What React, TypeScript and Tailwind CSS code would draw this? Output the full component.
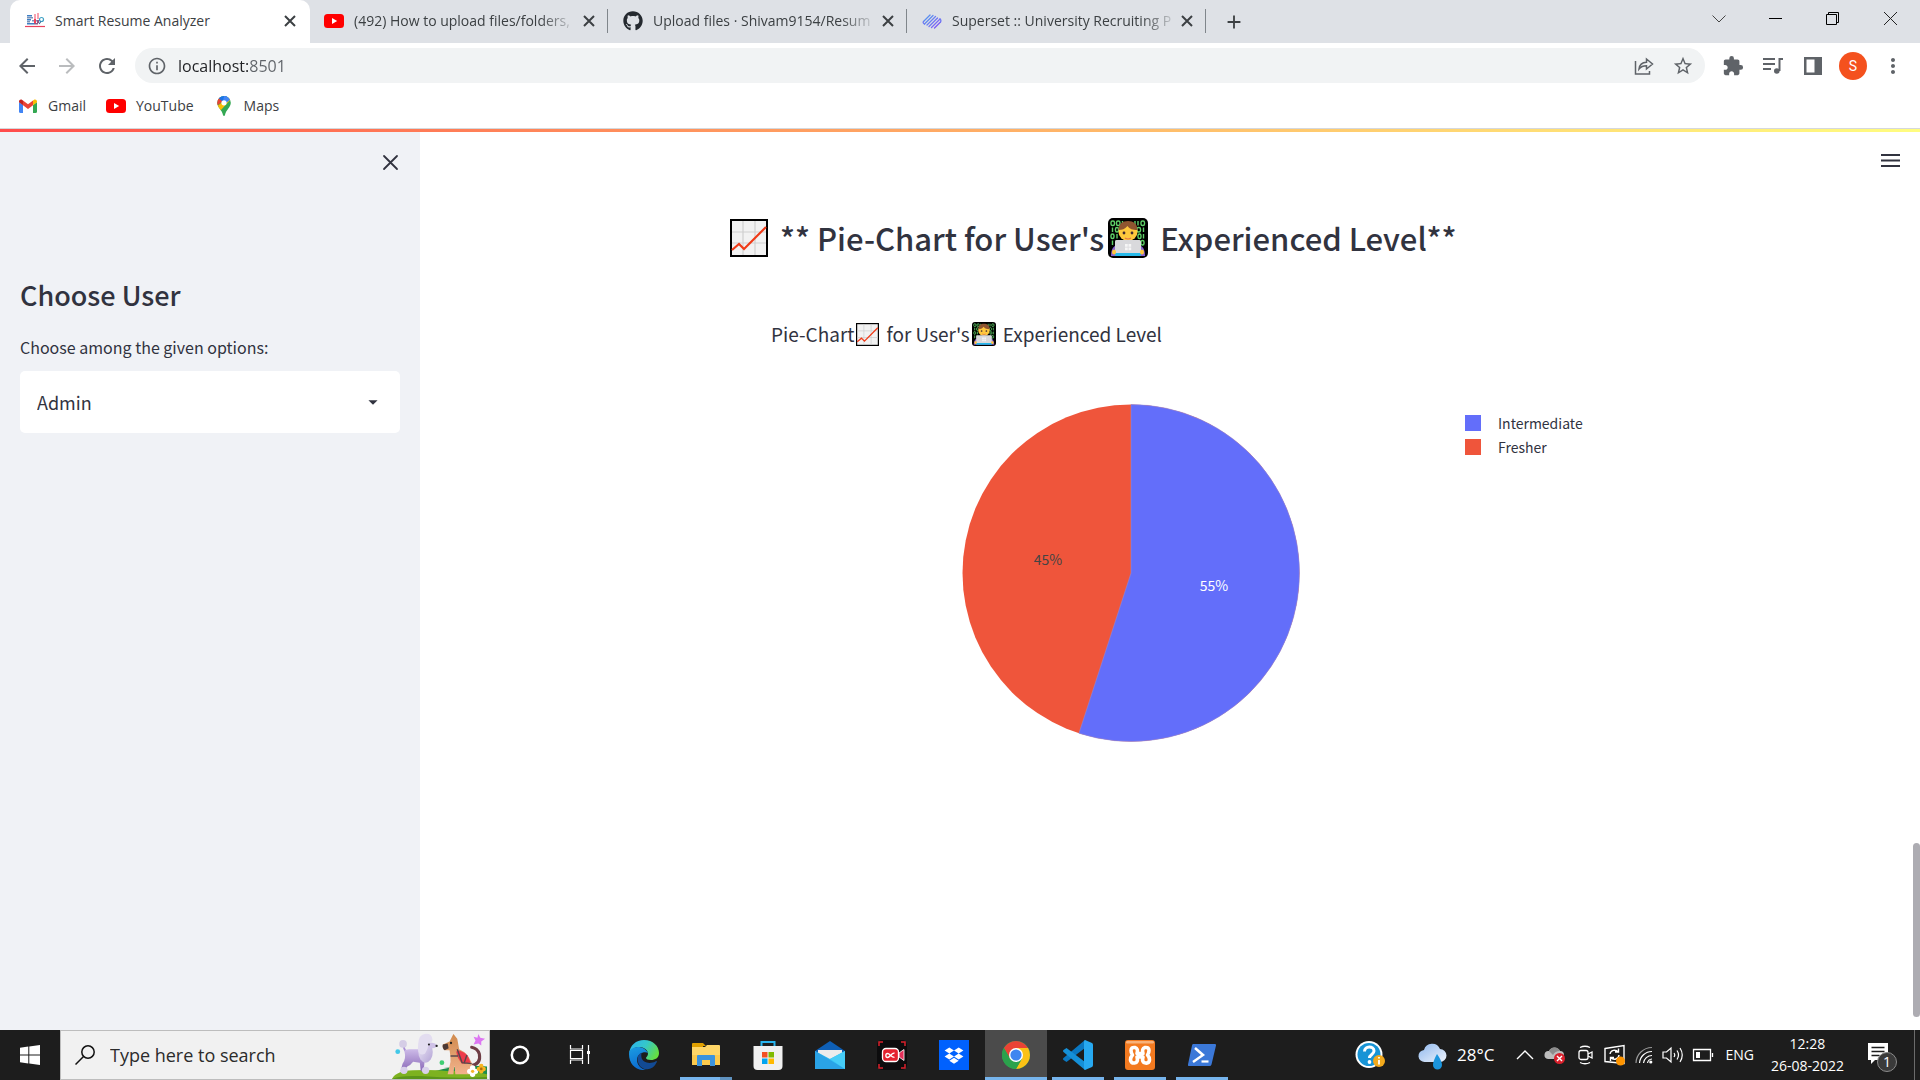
import React from 'react';
import type { ReactNode } from 'react';
import { FaGithub } from 'react-icons/fa';
import {
  MdArrowBack,
  MdArrowForward,
  MdRefresh,
  MdInfoOutline,
  MdStarBorder,
  MdExtension,
  MdMoreVert,
  MdAdd,
  MdArrowDropDown,
} from 'react-icons/md';

/* ---------- Emoji drawings ---------- */

function ChartEmoji({ className }: { className: string }) {
  return (
    <svg viewBox="0 0 38 38" className={className} role="img" aria-label="Chart increasing">
      <rect width="38" height="38" fill="#000" />
      <rect x="2" y="2" width="34" height="34" fill="#f2f2f2" />
      <path d="M2 13h34M2 24h34M13 2v34M25 2v34" stroke="#cfcfcf" strokeWidth="1.2" />
      <path d="M2 31l7-6 5 5L36 8" fill="none" stroke="#f03a17" strokeWidth="2.2" />
    </svg>
  );
}

function CoderEmoji({ className }: { className: string }) {
  return (
    <svg viewBox="0 0 40 40" className={className} role="img" aria-label="Man technologist">
      <rect width="40" height="40" rx="5" fill="#000" />
      <g fill="none" stroke="#5fd068" strokeWidth="1.4">
        <rect x="3" y="3" width="3.500" height="4.500" rx="1.500" />
        <rect x="8.500" y="3" width="3.500" height="4.500" rx="1.500" />
        <rect x="33" y="3" width="3.500" height="4.500" rx="1.500" />
        <rect x="7.500" y="9.500" width="3" height="4.500" rx="1.500" />
        <rect x="29" y="9.500" width="3.500" height="4.500" rx="1.500" />
        <rect x="30" y="16" width="3" height="4.500" rx="1.500" />
        <rect x="3" y="16" width="3" height="4.500" rx="1.500" />
        <rect x="33" y="22.500" width="3" height="4.500" rx="1.500" />
        <path d="M14.500 3v4.500M27 3v4.500M30 3v4.500M4.500 9.500v4.500M35.500 9.500v4.500M9 16v4.500M35.500 16v4.500M4.500 22.500v4.500M8 22.500v4.500M30.500 22.500v4.500" />
      </g>
      <path d="M3 38c0-8 3-11 9-11h16c6 0 9 3 9 11z" fill="#8a63d2" />
      <ellipse cx="20" cy="14" rx="9.500" ry="9" fill="#ffc83d" />
      <path d="M10.500 12c0-6 4-9 9.500-9s9.500 3 9.500 9c-5 0-8-1-10-4-3 3-5 4-9 4z" fill="#8f5530" />
      <circle cx="16" cy="15" r="1.400" fill="#402a32" />
      <circle cx="24" cy="15" r="1.400" fill="#402a32" />
      <path d="M17 20q3 2 6 0" fill="none" stroke="#e2704a" strokeWidth="1.200" />
      <rect x="7" y="34" width="26" height="4" rx="1" fill="#26b8e8" />
      <rect x="7" y="22" width="26" height="13" rx="1.500" fill="#d9d9dc" />
      <path d="M17 26h2.700v2.700H17zM20.500 26h2.700v2.700h-2.700zM17 29.500h2.700v2.700H17zM20.500 29.500h2.700v2.700h-2.700z" fill="#f6f6f6" />
      <ellipse cx="6" cy="34" rx="2" ry="2.500" fill="#ffc83d" />
      <ellipse cx="34" cy="34" rx="2" ry="2.500" fill="#ffc83d" />
    </svg>
  );
}

/* ---------- Site icons ---------- */

function ResumeFavicon() {
  return (
    <svg viewBox="0 0 20 20" className="size-5 shrink-0" aria-hidden="true">
      <path d="M2 4h5v1.500H2zM2 8h4v1.500H2zM2 12h7v1.500H2z" fill="#3d7fc4" />
      <path d="M2 6h6v1.500H2zM7 9h5v1.500H7zM2 10h3v1.500H2z" fill="#7b93b8" />
      <path d="M9 3h2v5H9zM12 2h2v6h-2z" fill="#f7a3b0" />
      <path d="M9 8h2v4H9z" fill="#f2405c" />
      <path d="M12 9h2v3h-2zM9 12h4v1.500H9z" fill="#8b5a86" />
      <circle cx="16.500" cy="8.500" r="2" fill="none" stroke="#3da0c4" strokeWidth="1.200" />
      <path d="M14 13l2-2.500" stroke="#38639a" strokeWidth="1.200" />
      <path d="M0 15.500h20" stroke="#e8425c" strokeWidth="1.200" />
    </svg>
  );
}

function YouTubeIcon() {
  return (
    <svg viewBox="0 0 20 20" className="size-5 shrink-0" aria-hidden="true">
      <rect x="0" y="3" width="20" height="14" rx="3.500" fill="#f00" />
      <path d="M8 7l5.200 3L8 13z" fill="#fff" />
    </svg>
  );
}

function SupersetIcon() {
  return (
    <svg viewBox="0 0 20 20" className="size-5 shrink-0" aria-hidden="true">
      <g fill="none" strokeWidth="1.300" strokeLinecap="round">
        <path d="M1.500 10.500L8 4" stroke="#5a8df0" />
        <path d="M2.500 13L11 4.500" stroke="#5f88f1" />
        <path d="M5 14l8.500-8.500" stroke="#6a7ff2" />
        <path d="M7 15.500L15.500 7" stroke="#7276f4" />
        <path d="M9.500 16.500L18 8" stroke="#7a6af5" />
        <path d="M12.500 17l6-6" stroke="#7a5cf5" />
        <path d="M1.500 10.500q-1 1.500 1 2.500M18 8q1.500 1.500.5 3" stroke="#6f78f3" />
      </g>
    </svg>
  );
}

function GmailIcon() {
  return (
    <svg viewBox="0 0 20 20" className="size-5 shrink-0" aria-hidden="true">
      <path d="M1 6v9.500A1.500 1.500 0 0 0 2.500 17H5V9z" fill="#4285f4" />
      <path d="M19 6v9.500a1.500 1.500 0 0 1-1.500 1.500H15V9z" fill="#34a853" />
      <path d="M15 4.500V9.200l4-3V5.500c0-2-2-2.600-3.200-1.600z" fill="#fbbc04" />
      <path d="M5 9.200V4.500l5 3.700 5-3.700v4.700l-5 3.800z" fill="#ea4335" />
      <path d="M1 5.500v.7l4 3V4.500l-.8-.6C3 3 1 3.500 1 5.500z" fill="#c5221f" />
    </svg>
  );
}

function MapsIcon() {
  return (
    <svg viewBox="0 0 20 20" className="size-5 shrink-0" aria-hidden="true">
      <clipPath id="pin">
        <path d="M10 0a6.800 6.800 0 0 0-6.800 6.800c0 4.600 4.600 6.700 5.800 12.200.3 1.300 1.700 1.300 2 0 1.200-5.500 5.800-7.600 5.800-12.200A6.800 6.800 0 0 0 10 0z" />
      </clipPath>
      <g clipPath="url(#pin)">
        <rect width="20" height="20" fill="#34a853" />
        <path d="M0 13L15 0h5L6 15z" fill="#fbbc04" />
        <path d="M0 12V0h5l4 5z" fill="#ea4335" />
        <path d="M4.500 2L9 6l6-6H5z" fill="#1a73e8" />
        <path d="M10 0h7v3l-6 5-2-3z" fill="#4285f4" />
      </g>
      <circle cx="10" cy="6.800" r="2.600" fill="#fff" />
    </svg>
  );
}

/* ---------- Browser ---------- */

type TabInfo = { title: string; icon: ReactNode; active?: boolean };

const tabs: TabInfo[] = [
  { title: 'Smart Resume Analyzer', icon: <ResumeFavicon />, active: true },
  { title: '(492) How to upload files/folders,', icon: <YouTubeIcon /> },
  { title: 'Upload files · Shivam9154/Resum', icon: <FaGithub className="size-5 shrink-0 text-[#24292f]" /> },
  { title: 'Superset :: University Recruiting P', icon: <SupersetIcon /> },
];

function TabStrip() {
  return (
    <div className="flex h-[43px] bg-[#dee1e6] pl-[10px]">
      {tabs.map((tab) => (
        <div
          key={tab.title}
          className={
            tab.active
              ? 'flex w-[300px] items-center rounded-t-[10px] bg-white pr-3 pb-0.5 pl-[15px]'
              : 'relative flex w-[299px] items-center pr-3 pb-0.5 pl-[14px] after:absolute after:right-px after:h-6 after:w-px after:bg-[#80868b]'
          }
        >
          <button className="flex min-w-0 flex-1 items-center gap-[10px] text-left text-sm text-[#3c4043]">
            {tab.icon}
            <span
              className={
                tab.active
                  ? 'whitespace-nowrap'
                  : 'whitespace-nowrap [mask-image:linear-gradient(to_right,#000_calc(100%-30px),#0003)]'
              }
            >
              {tab.title}
            </span>
          </button>
          <button aria-label="Close tab" className="flex w-4 justify-center text-[#3c4043]">
            <svg viewBox="0 0 12 12" className="size-3" stroke="currentColor" strokeWidth="2">
              <path d="M1 1l10 10M11 1L1 11" />
            </svg>
          </button>
        </div>
      ))}
      <button aria-label="New tab" className="ml-4 text-[#3c4043]">
        <MdAdd className="size-[22px]" />
      </button>
      <div className="ml-auto flex h-[37px] items-center text-black">
        <button aria-label="Search tabs" className="flex w-[57px] justify-center">
          <svg viewBox="0 0 14 8" className="h-2 w-3.5" fill="none" stroke="#444">
            <path d="M.5.5L7 7 13.500.5" />
          </svg>
        </button>
        <button aria-label="Minimize" className="flex w-[57px] justify-center">
          <svg viewBox="0 0 13 13" className="size-[13px]">
            <path d="M0 6.500h13" stroke="#000" />
          </svg>
        </button>
        <button aria-label="Restore" className="flex w-[57px] justify-center">
          <svg viewBox="0 0 13 13" className="size-[13px]" fill="none" stroke="#000">
            <path d="M.5 2.500h10v10H.5zM2.500 2.500v-2h10v10h-2" />
          </svg>
        </button>
        <button aria-label="Close window" className="flex w-[59px] justify-center">
          <svg viewBox="0 0 13 13" className="size-[13px]" stroke="#222">
            <path d="M0 0l13 13M13 0L0 13" />
          </svg>
        </button>
      </div>
    </div>
  );
}

function Toolbar() {
  return (
    <div className="flex h-[45px] items-center gap-4 bg-white pr-[15px] pl-[15px] text-[#5f6368]">
      <button aria-label="Back" className="size-6">
        <MdArrowBack className="size-6" />
      </button>
      <button aria-label="Forward" className="size-6 text-[#babcbe]">
        <MdArrowForward className="size-6" />
      </button>
      <button aria-label="Reload" className="size-6">
        <MdRefresh className="size-6" />
      </button>
      <div className="flex h-[35px] flex-1 items-center rounded-full bg-[#f1f3f4] pr-[11px] pl-3">
        <MdInfoOutline className="size-5" />
        <input
          aria-label="Address"
          defaultValue="localhost:8501"
          className="ml-[11px] min-w-0 flex-1 bg-[linear-gradient(to_right,#202124_71px,#5f6368_71px)] bg-clip-text text-base text-transparent outline-none"
        />
        <button aria-label="Share" className="mr-[18px]">
          <svg viewBox="0 0 20 20" className="size-5" fill="none" stroke="currentColor" strokeWidth="1.500">
            <path d="M1.500 5v13h14v-3" />
            <path d="M5 13c.5-4.500 3-6.500 7.500-6.700V3l6 5-6 5V9.800C9 9.800 6.700 10.800 5 13z" />
          </svg>
        </button>
        <button aria-label="Bookmark this tab">
          <MdStarBorder className="size-[22px]" />
        </button>
      </div>
      <button aria-label="Extensions" className="flex size-6 items-center justify-center">
        <MdExtension className="size-[22px]" />
      </button>
      <button aria-label="Media controls" className="size-6">
        <svg viewBox="0 0 24 24" className="size-6" fill="none" stroke="currentColor" strokeWidth="2">
          <path d="M2 5h12M2 10h12M2 15h8M18.500 17V5H22" />
          <circle cx="15.800" cy="17" r="2.800" fill="currentColor" stroke="none" />
        </svg>
      </button>
      <button aria-label="Side panel" className="size-6">
        <svg viewBox="0 0 24 24" className="size-6">
          <path d="M3 3h18v18H3zM5.500 5.500v13h8v-13z" fill="currentColor" fillRule="evenodd" />
        </svg>
      </button>
      <button
        aria-label="Profile"
        className="-mr-0.5 -ml-0.5 size-7 rounded-full bg-[#f4511e] font-['Roboto'] text-sm text-white"
      >
        S
      </button>
      <button aria-label="Chrome menu" className="size-6">
        <MdMoreVert className="size-6" />
      </button>
    </div>
  );
}

function Bookmarks() {
  const items = [
    { label: 'Gmail', icon: <GmailIcon /> },
    { label: 'YouTube', icon: <YouTubeIcon /> },
    { label: 'Maps', icon: <MapsIcon /> },
  ];
  return (
    <nav className="flex h-[41px] items-center gap-5 border-b border-[#d5d8dc] bg-white pb-[5px] pl-[18px] text-sm text-[#3c4043]">
      {items.map((item) => (
        <a key={item.label} href="#" className="flex items-center gap-[10px]">
          {item.icon}
          {item.label}
        </a>
      ))}
    </nav>
  );
}

/* ---------- Page ---------- */

function Sidebar() {
  return (
    <aside className="w-[420px] shrink-0 bg-[#f0f2f6] px-5 text-[#31333f]">
      <div className="flex h-[59px] items-center justify-end">
        <button aria-label="Close sidebar">
          <svg viewBox="0 0 20 20" className="size-5" stroke="currentColor" strokeWidth="1.800" strokeLinecap="round">
            <path d="M4 4l13 13M17 4L4 17" />
          </svg>
        </button>
      </div>
      <h2 className="mt-20 text-[27px] leading-[48px] font-medium">Choose User</h2>
      <label htmlFor="role" className="mt-3 block text-base leading-8">
        Choose among the given options:
      </label>
      <div className="relative mt-2">
        <select
          id="role"
          defaultValue="Admin"
          className="h-[62px] w-full appearance-none rounded-[5px] bg-white pl-[17px] text-[18px] outline-none"
        >
          <option>Admin</option>
          <option>Normal User</option>
        </select>
        <MdArrowDropDown className="pointer-events-none absolute top-5 right-4 size-[22px]" />
      </div>
    </aside>
  );
}

const slices = [
  { label: 'Intermediate', color: 'bg-[#636efa]' },
  { label: 'Fresher', color: 'bg-[#ef553b]' },
];

function PieChart() {
  return (
    <figure className="mt-12 text-[#31333f]">
      <figcaption className="flex items-center pl-[41px] text-[19px] leading-12">
        <span>Pie-Chart</span>
        <ChartEmoji className="mx-0.5 size-[23px]" />
        <span className="ml-[5px]">for User's</span>
        <CoderEmoji className="mx-0.5 size-6" />
        <span className="ml-[5px]">Experienced Level</span>
      </figcaption>
      <div className="mt-[46px] flex pl-[232px]">
        <svg viewBox="-169 -169 338 338" className="size-[338px] shrink-0" role="img" aria-label="55% Intermediate, 45% Fresher">
          <circle r="168.500" fill="#ef553b" />
          <path d="M0 0V-168.500A168.500 168.500 0 1 1 -52.070 160.250Z" fill="#636efa" stroke="#9b8fd0" strokeWidth=".5" />
          <text x="-83" y="-8" textAnchor="middle" fontSize="14" fill="#444">
            45%
          </text>
          <text x="83" y="18" textAnchor="middle" fontSize="14" fill="#fff">
            55%
          </text>
        </svg>
        <ul className="ml-[165px] pt-[7px] text-[14px] leading-6">
          {slices.map((s) => (
            <li key={s.label} className="flex items-center">
              <span className={`mr-[17px] size-4 ${s.color}`} />
              {s.label}
            </li>
          ))}
        </ul>
      </div>
    </figure>
  );
}

function Page() {
  return (
    <div className="flex min-h-0 flex-1 flex-col bg-white font-['Noto_Sans_CJK_SC','Noto_Sans',sans-serif]">
      <div className="h-[3px] bg-linear-to-r from-[#ff4b4b] to-[#fffd80]" />
      <div className="flex min-h-0 flex-1">
        <Sidebar />
        <main className="relative min-w-0 flex-1">
          <div className="flex h-14 items-center justify-end pr-5">
            <button aria-label="Main menu" className="text-[#31333f]">
              <svg viewBox="0 0 19 13" className="h-[13px] w-[19px]" stroke="currentColor" strokeWidth="1.800">
                <path d="M0 1h19M0 6.500h19M0 12h19" />
              </svg>
            </button>
          </div>
          <div className="mx-auto w-full max-w-[880px]">
            <h1 className="mt-[26px] flex items-center text-[31px] leading-12 font-medium whitespace-nowrap text-[#31333f]">
              <ChartEmoji className="size-[38px]" />
              <span className="ml-3">** Pie-Chart for User's</span>
              <CoderEmoji className="mx-1 size-10" />
              <span className="ml-2">Experienced Level**</span>
            </h1>
            <PieChart />
          </div>
          <div className="absolute right-0 bottom-[13px] h-[174px] w-[7px] rounded-full bg-[#adacb2]" />
        </main>
      </div>
    </div>
  );
}

/* ---------- Taskbar ---------- */

function PetsArt() {
  return (
    <svg viewBox="0 0 99 50" className="h-full w-[99px] shrink-0" aria-hidden="true">
      <defs>
        <linearGradient id="fur" x1="0" y1="0" x2="0" y2="1">
          <stop offset="0" stopColor="#cdbbe8" />
          <stop offset="1" stopColor="#8a68b8" />
        </linearGradient>
        <linearGradient id="mane" x1="0" y1="0" x2="1" y2="1">
          <stop offset="0" stopColor="#eeeaf6" />
          <stop offset="1" stopColor="#b3a3d6" />
        </linearGradient>
        <linearGradient id="tan" x1="0" y1="0" x2="0" y2="1">
          <stop offset="0" stopColor="#d08a4c" />
          <stop offset="1" stopColor="#f2b28c" />
        </linearGradient>
      </defs>
      <path d="M40 43q30-9 59-6v13H40z" fill="#1c8d49" />
      <path d="M0 50q5-9 22-9 20-1 38 1 20-2 39 3v5z" fill="#7db220" />
      <path d="M0 50q8-4 30-3 35 3 69 1v2z" fill="#5b951a" />
      <path d="M12 16q1 4 3 6" stroke="#a98fd6" strokeWidth="2" fill="none" />
      <circle cx="11.500" cy="13.500" r="4" fill="#d5cde6" />
      <path d="M13 21q1-2 5-2h13l3 12-1 11h-3l-1-9-7-1q-3 4-6 5l-4 5h-3l2-8q4-5 2-13z" fill="url(#fur)" />
      <ellipse cx="35" cy="22" rx="7.500" ry="11" fill="url(#mane)" />
      <path d="M39 12q6 0 8 3-1 3-7 3h-4z" fill="#cfc2e6" />
      <path d="M28 9q1-5 6-6 7-1 8 5 1 3-3 4-2 8-5 12-6 2-7-5 0-6 1-10z" fill="#e3ddf0" />
      <circle cx="46.500" cy="15.500" r="1.200" fill="#222" />
      <circle cx="38.500" cy="14" r="1.100" fill="#222" />
      <circle cx="12.500" cy="41" r="3.800" fill="#d9d1ea" />
      <circle cx="35" cy="41" r="3.800" fill="#d9d1ea" />
      <path d="M83 36q10-2 8-12-2-6-8-7" stroke="#6e3d44" strokeWidth="3.200" fill="none" strokeLinecap="round" />
      <path d="M53 14l7-3 4-8 4 5 2 11q9 4 13 14 3 9 0 12H66l-1-9-1 9h-6l3-13q0-7-1-12l-5 0q-3-2-2-6z" fill="url(#tan)" />
      <path d="M53 14l5-1 1 5-4 2q-3-2-2-6z" fill="#4a3834" />
      <circle cx="61.500" cy="12.500" r="1.200" fill="#222" />
      <path d="M68 20q7 1 11 6l3 7-9 1q-5-5-6-12z" fill="#ee3b4b" />
      <path d="M61 26h8M68 19l5 14 10 1M78 25l-3 9" stroke="#59484c" strokeWidth="1.500" fill="none" />
      <path d="M90 3l2 4 5 1-4 3v4l-3-2-5 1 2-4-2-4 4 1z" fill="#dd77f2" />
      <circle cx="6" cy="21.500" r="2.500" fill="#43c8e8" />
      <circle cx="52" cy="33" r="2.500" fill="#3fce73" />
      <g fill="#fff">
        <circle cx="84" cy="38.500" r="2.800" />
        <circle cx="81" cy="42" r="2.800" />
        <circle cx="87" cy="42" r="2.800" />
        <circle cx="84" cy="45" r="2.800" />
      </g>
      <circle cx="84" cy="42" r="1.700" fill="#f5b62b" />
      <g fill="#f7b520">
        <circle cx="93" cy="36.500" r="2.300" />
        <circle cx="90.500" cy="39.500" r="2.300" />
        <circle cx="95.500" cy="39.500" r="2.300" />
        <circle cx="93" cy="42" r="2.300" />
      </g>
      <circle cx="93" cy="39.500" r="1.400" fill="#b06b12" />
    </svg>
  );
}

const cls = 'size-[30px]';

function CortanaIcon() {
  return (
    <svg viewBox="0 0 30 30" className={cls} aria-hidden="true">
      <circle cx="15" cy="15" r="8.200" fill="none" stroke="#fff" strokeWidth="2.500" />
    </svg>
  );
}

function TaskViewIcon() {
  return (
    <svg viewBox="0 0 30 30" className={cls} fill="none" stroke="#fff" strokeWidth="1.200" aria-hidden="true">
      <path d="M5.500 5v4h12V5M5.500 24v-4h12v4M5.500 10.500h12v8h-12zM23.500 5v19" />
      <path d="M22 11h3v3h-3z" fill="#fff" stroke="none" />
    </svg>
  );
}

function EdgeIcon() {
  return (
    <svg viewBox="0 0 30 30" className={cls} aria-hidden="true">
      <defs>
        <linearGradient id="eg" x1="0" y1="0.200" x2="1" y2="0.600">
          <stop offset="0" stopColor="#2bb4ee" />
          <stop offset="0.500" stopColor="#35c7c9" />
          <stop offset="1" stopColor="#66e03e" />
        </linearGradient>
        <linearGradient id="eb" x1="0" y1="0" x2="0.300" y2="1">
          <stop offset="0" stopColor="#1b9de2" />
          <stop offset="1" stopColor="#0c6cd0" />
        </linearGradient>
      </defs>
      <path d="M0 14C1 5 7 0 15 0c9 0 15 6 15 13 0 5-4 7-8 7-3 0-5-1-5-2 0-1 2-2 2-4 0-4-4-7-9-7-6 0-9 4-10 7z" fill="url(#eg)" />
      <path d="M0 14c0-4 4-7 9-7 4 0 8 2 10 6-3-2-11 0-11 7 0 5 4 9 9 10-9 1-17-5-17-16z" fill="url(#eb)" />
      <path d="M12.500 12.500c-4 2-5 7-3 11 2 5 8 7 12 5 3-1 5-4 6-6 1-1 0-2-1-1-6 3-13 1-14-4-.5-2 0-4 0-5z" fill="#124a94" />
    </svg>
  );
}

function ExplorerIcon() {
  return (
    <svg viewBox="0 0 30 30" className={cls} aria-hidden="true">
      <path d="M1 4q0-1 1-1h10l3 3h-3v4H1z" fill="#e0a000" />
      <path d="M1 7h13l2-2h12q1 0 1 1v19H1z" fill="#ffd667" />
      <path d="M1 15h28v10H1z" fill="#fbc94c" />
      <path d="M6 26V16q0-1 1-1h16q1 0 1 1v10h-5v-6h-8v6z" fill="#3b93dd" />
    </svg>
  );
}

function StoreIcon() {
  return (
    <svg viewBox="0 0 30 30" className={cls} aria-hidden="true">
      <path d="M8.500 7V2h13v5" fill="none" stroke="#28b4ee" strokeWidth="2" />
      <path d="M.5 6h29v20q0 4-4 4h-21q-4 0-4-4z" fill="#f0f0f0" />
      <path d="M9 12h5.500v5.500H9z" fill="#f25022" />
      <path d="M15.500 12H21v5.500h-5.500z" fill="#7fba00" />
      <path d="M9 18.500h5.500V24H9z" fill="#00a4ef" />
      <path d="M15.500 18.500H21V24h-5.500z" fill="#ffb900" />
    </svg>
  );
}

function MailIcon() {
  return (
    <svg viewBox="0 0 30 30" className={cls} aria-hidden="true">
      <path d="M0 11L15 1l15 10v6H0z" fill="#0e5fb5" />
      <path d="M3 10h24v8L15 25 3 18z" fill="#ececec" />
      <path d="M0 11l15 8 15-8v18H0z" fill="#30bdf2" />
      <path d="M0 11l30 18H0z" fill="#2aa3e6" />
      <path d="M30 11v18L15 19z" fill="#46cdf7" />
    </svg>
  );
}

function RecorderIcon() {
  return (
    <svg viewBox="0 0 30 30" className={cls} aria-hidden="true">
      <rect width="30" height="30" rx="5" fill="#0c0c0d" />
      <path d="M2 6V2h4M24 2h4v4M28 24v4h-4M6 28H2v-4" fill="none" stroke="#d9202b" strokeWidth="1.500" />
      <path d="M22 13l5-3.500v11L22 17z" fill="#e5305a" stroke="#fff" strokeWidth=".8" />
      <rect x="5.500" y="8.500" width="16" height="13" rx="3.500" fill="#e5232f" stroke="#fff" strokeWidth="1.300" />
      <path d="M17.500 13c-3.500 0-4.500 4.500-7 4.500-2.200 0-2.200-4 0-4 2.500 0 3.500 3.800 7 3.800" fill="none" stroke="#fff" strokeWidth="1.300" />
    </svg>
  );
}

function DropboxIcon() {
  return (
    <svg viewBox="0 0 30 30" className={cls} aria-hidden="true">
      <path d="M0 0h30v30H0z" fill="#0061fe" />
      <path d="M10.300 7.500l4.700 3-4.700 3-4.700-3zM19.700 7.500l4.700 3-4.700 3-4.700-3zM10.300 13.500l4.700 3-4.700 3-4.700-3zM19.700 13.500l4.700 3-4.700 3-4.700-3zM15 17.800l4.700 3-4.700 3-4.700-3z" fill="#fff" />
    </svg>
  );
}

function ChromeIcon() {
  return (
    <svg viewBox="0 0 30 30" className={cls} aria-hidden="true">
      <circle cx="15" cy="15" r="14" fill="#34a853" />
      <path d="M15 15L2.900 8A14 14 0 0 1 27.100 8z" fill="#ea4335" />
      <path d="M15 8h12.100A14 14 0 0 1 15 29l6-10.500z" fill="#fbc116" />
      <path d="M2.900 8L9 18.500 15 15l-3-7z" fill="#ea4335" />
      <path d="M2.900 8A14 14 0 0 0 15 29l6-10.500L15 15 9 18.500z" fill="#2ba24c" />
      <circle cx="15" cy="15" r="7" fill="#fff" />
      <circle cx="15" cy="15" r="5.600" fill="#3f86f0" />
    </svg>
  );
}

function CodeIcon() {
  return (
    <svg viewBox="0 0 30 30" className={cls} aria-hidden="true">
      <path d="M22 0v8L3.500 22l-3-2q-1-1 0-2z" fill="#0a78c2" />
      <path d="M22 30v-8L3.500 8l-3 2q-1 1 0 2z" fill="#1590d8" />
      <path d="M22 0l7 3q1 .5 1 2v20q0 1.500-1 2l-7 3q-1-.5-1-2V2q0-1.500 1-2z" fill="#27a9f1" />
    </svg>
  );
}

function XamppIcon() {
  return (
    <svg viewBox="0 0 30 30" className={cls} aria-hidden="true">
      <rect width="30" height="30" rx="3" fill="#f37a20" />
      <rect x="1" y="1" width="28" height="2.500" rx="1.200" fill="#f8b27a" />
      <path d="M12 13.500q1.500-5-2-6-4-.5-4 3 0 2.500 1.500 4.500Q5.500 17 5.500 20q.5 3.500 4 3 4-.5 2.500-6h6q-1.500 5.500 2.500 6 3.500.5 4-3 0-3-2-5 1.500-2 1.500-4.500 0-3.500-4-3-3.500 1-2 6z" fill="none" stroke="#fff" strokeWidth="3.600" strokeLinejoin="round" />
      <path d="M12 13.500h6v3.500h-6z" fill="#fff" />
    </svg>
  );
}

function PowerShellIcon() {
  return (
    <svg viewBox="0 0 30 30" className={cls} aria-hidden="true">
      <path d="M6 4h22q1.500 0 1 1.500l-4.500 19Q24 26 22.500 26H2q-1.500 0-1-1.500l4-19Q5.300 4 6 4z" fill="#3b78d8" />
      <path d="M8 8l8 7-10 7" fill="none" stroke="#fff" strokeWidth="2.500" />
      <path d="M14.500 21.500h7" stroke="#fff" strokeWidth="2.200" />
    </svg>
  );
}

type AppInfo = { name: string; icon: ReactNode; state?: 'open' | 'stacked' | 'current' };

const apps: AppInfo[] = [
  { name: 'Microsoft Edge', icon: <EdgeIcon /> },
  { name: 'File Explorer', icon: <ExplorerIcon />, state: 'stacked' },
  { name: 'Microsoft Store', icon: <StoreIcon /> },
  { name: 'Mail', icon: <MailIcon /> },
  { name: 'Screen Recorder', icon: <RecorderIcon /> },
  { name: 'Dropbox', icon: <DropboxIcon /> },
  { name: 'Google Chrome', icon: <ChromeIcon />, state: 'current' },
  { name: 'Visual Studio Code', icon: <CodeIcon />, state: 'open' },
  { name: 'XAMPP', icon: <XamppIcon />, state: 'open' },
  { name: 'PowerShell', icon: <PowerShellIcon />, state: 'open' },
];

const appStyles = {
  none: 'flex w-[62px] items-center justify-center',
  open: 'relative flex w-[62px] items-center justify-center after:absolute after:inset-x-[5px] after:bottom-0 after:h-[3px] after:bg-[#76b4ec]',
  stacked:
    'relative flex w-[62px] items-center justify-center after:absolute after:inset-x-[5px] after:bottom-0 after:h-[3px] after:bg-[linear-gradient(to_right,#76b4ec_40px,#5f92bf_40px)]',
  current:
    'relative flex w-[62px] items-center justify-center bg-[#4b4b4b] after:absolute after:inset-x-0 after:bottom-0 after:h-[3px] after:bg-[#76b4ec]',
};

function Tray() {
  return (
    <div className="ml-auto flex items-center text-white">
      <button aria-label="Help">
        <svg viewBox="0 0 30 30" className={cls}>
          <circle cx="14" cy="14.500" r="13.500" fill="#fff" />
          <circle cx="14" cy="14.500" r="11.500" fill="#1794d6" />
          <path d="M9.500 11.500c0-6 9.500-6 9.500-.5 0 3.500-4.500 3.500-4.500 7" fill="none" stroke="#fff" strokeWidth="3" />
          <circle cx="14.500" cy="22" r="1.900" fill="#fff" />
          <circle cx="24" cy="21" r="6" fill="#f2a91c" />
          <path d="M24 17v1.500M24 20v4.500" stroke="#fff" strokeWidth="1.800" />
        </svg>
      </button>
      <button className="ml-8 flex items-center gap-2.5 text-[17px]">
        <svg viewBox="0 0 30 30" className={cls} aria-hidden="true">
          <defs>
            <linearGradient id="cl" x1="0" y1="0" x2="1" y2="1">
              <stop offset="0" stopColor="#8fb8ee" />
              <stop offset="1" stopColor="#eef3fb" />
            </linearGradient>
          </defs>
          <path d="M8 22a6 6 0 0 1-1-12 8.500 8.500 0 0 1 16-1 6.500 6.500 0 0 1 0 13z" fill="url(#cl)" />
          <path d="M20 14q5 7 5 11a4.500 4.500 0 0 1-9 0q0-4 4-11z" fill="#1b95dd" />
        </svg>
        28°C
      </button>
      <button aria-label="Show hidden icons" className="ml-[22px]">
        <svg viewBox="0 0 18 10" className="h-2.5 w-[18px]" fill="none" stroke="#fff" strokeWidth="1.400">
          <path d="M1 9l8-8 8 8" />
        </svg>
      </button>
      <button aria-label="OneDrive" className="ml-2.5">
        <svg viewBox="0 0 22 20" className="h-5 w-[22px]">
          <path d="M4 14a4 4 0 0 1 1-8 6 6 0 0 1 11 0 4 4 0 0 1 0 8z" fill="#bdbdbd" />
          <path d="M5 6a6 6 0 0 1 11 0q-5 0-7 4z" fill="#8c8c8c" />
          <circle cx="15.500" cy="13.500" r="5.500" fill="#d8202c" />
          <path d="M13 11l5 5M18 11l-5 5" stroke="#fff" strokeWidth="1.400" />
        </svg>
      </button>
      <button aria-label="Meet Now" className="ml-[11px]">
        <svg viewBox="0 0 18 20" className="h-5 w-[18px]" fill="none" stroke="#fff" strokeWidth="1.300">
          <path d="M3 2.500q5-2.500 10 0M3 17.500q5 2.500 10 0" />
          <rect x="2" y="5.500" width="9" height="9" rx="2" />
          <path d="M11 9l4-2v6l-4-2" />
        </svg>
      </button>
      <button aria-label="Windows Update" className="ml-[9px]">
        <svg viewBox="0 0 22 22" className="size-[22px]" fill="none" stroke="#fff" strokeWidth="1.400">
          <path d="M1 4.500L20 1.500v18L1 17.500z" />
          <path d="M6 10a4.500 4.500 0 0 1 8-2M14.500 4.500V8H11M15 11a4.500 4.500 0 0 1-8 2.500M6.500 17v-3.500H10" />
          <circle cx="16.500" cy="17" r="4.500" fill="#ff9500" stroke="none" />
        </svg>
      </button>
      <button aria-label="Wi-Fi" className="ml-[9px]">
        <svg viewBox="0 0 18 18" className="size-[18px]" fill="none" stroke="#fff" strokeWidth="1.200">
          <path d="M1 17A16 16 0 0 1 17 1.500" stroke="#999" />
          <path d="M4.500 17A12.500 12.500 0 0 1 17 5.500M8.500 17a8.500 8.500 0 0 1 8.500-7.500M12.500 17a5 5 0 0 1 4.500-4" />
          <circle cx="15.800" cy="16" r="1.600" fill="#fff" stroke="none" />
        </svg>
      </button>
      <button aria-label="Volume" className="ml-[9px]">
        <svg viewBox="0 0 22 20" className="h-5 w-[22px]" fill="none" stroke="#fff" strokeWidth="1.200">
          <path d="M1 7h3.500L9 3v14l-4.500-4H1z" />
          <path d="M12 8q1.500 2 0 4M15 5.500q3 4.500 0 9M18 3q4.500 7 0 14" />
        </svg>
      </button>
      <button aria-label="Battery" className="ml-2">
        <svg viewBox="0 0 22 14" className="h-3.5 w-[22px]" fill="none" stroke="#fff" strokeWidth="1.300">
          <path d="M1.500 1.500h17v11h-17zM20.500 5v4" />
          <path d="M4 4h4v6H4z" fill="#fff" stroke="none" />
        </svg>
      </button>
      <button className="ml-[11px] text-sm">ENG</button>
      <button className="ml-[17px] text-center text-sm leading-[22px]">
        <span className="block">12:28</span>
        <span className="block">26-08-2022</span>
      </button>
      <button aria-label="Notifications" className="ml-[23px] flex">
        <svg viewBox="0 0 34 36" className="h-9 w-[34px]">
          <path d="M1 6h20v17H8l-4 4v-4H1z" fill="#fff" />
          <path d="M4.500 10.500h13M4.500 14.500h13M4.500 18.500h8" stroke="#1d1d1d" strokeWidth="1.300" />
          <circle cx="20" cy="25" r="9.500" fill="#3a3a3a" stroke="#8b8b8b" />
          <text x="20" y="30" textAnchor="middle" fontSize="14" fill="#fff">
            1
          </text>
        </svg>
      </button>
      <button aria-label="Show desktop" className="ml-[13px] h-[50px] w-[6px] border-l border-[#6b6b6b]" />
    </div>
  );
}

function Taskbar() {
  return (
    <footer className="flex h-[50px] shrink-0 bg-[#1d1d1d]">
      <button aria-label="Start" className="flex w-[60px] items-center justify-center">
        <svg viewBox="0 0 20 20" className="size-5" fill="#fff">
          <path d="M0 2.800L8.300 1.600V9.500H0zM9.300 1.500L20 0v9.500H9.300zM0 10.500h8.300v7.900L0 17.200zM9.300 10.500H20V20L9.300 18.500z" />
        </svg>
      </button>
      <div className="flex w-[430px] items-center border border-[#bdbdbd] bg-[#f1f1f1] pl-3.5">
        <svg viewBox="0 0 20 20" className="size-5" fill="none" stroke="#111" strokeWidth="1.500" aria-hidden="true">
          <circle cx="13" cy="7" r="6.200" />
          <path d="M8.500 11.500L.5 19.500" />
        </svg>
        <input
          type="search"
          aria-label="Search"
          placeholder="Type here to search"
          className="ml-[15px] min-w-0 flex-1 bg-transparent text-[18px] outline-none placeholder:text-[#2b2b2b]"
        />
        <PetsArt />
      </div>
      <button aria-label="Cortana" className="flex w-[60px] items-center justify-center">
        <CortanaIcon />
      </button>
      <button aria-label="Task View" className="mr-[3px] flex w-[60px] items-center justify-center">
        <TaskViewIcon />
      </button>
      {apps.map((app) => (
        <button key={app.name} aria-label={app.name} className={appStyles[app.state ?? 'none']}>
          {app.icon}
        </button>
      ))}
      <Tray />
    </footer>
  );
}

export default function App() {
  return (
    <div className="flex h-screen flex-col overflow-hidden font-['Open_Sans','Noto_Sans',sans-serif]">
      <header>
        <TabStrip />
        <Toolbar />
        <Bookmarks />
      </header>
      <Page />
      <Taskbar />
    </div>
  );
}
